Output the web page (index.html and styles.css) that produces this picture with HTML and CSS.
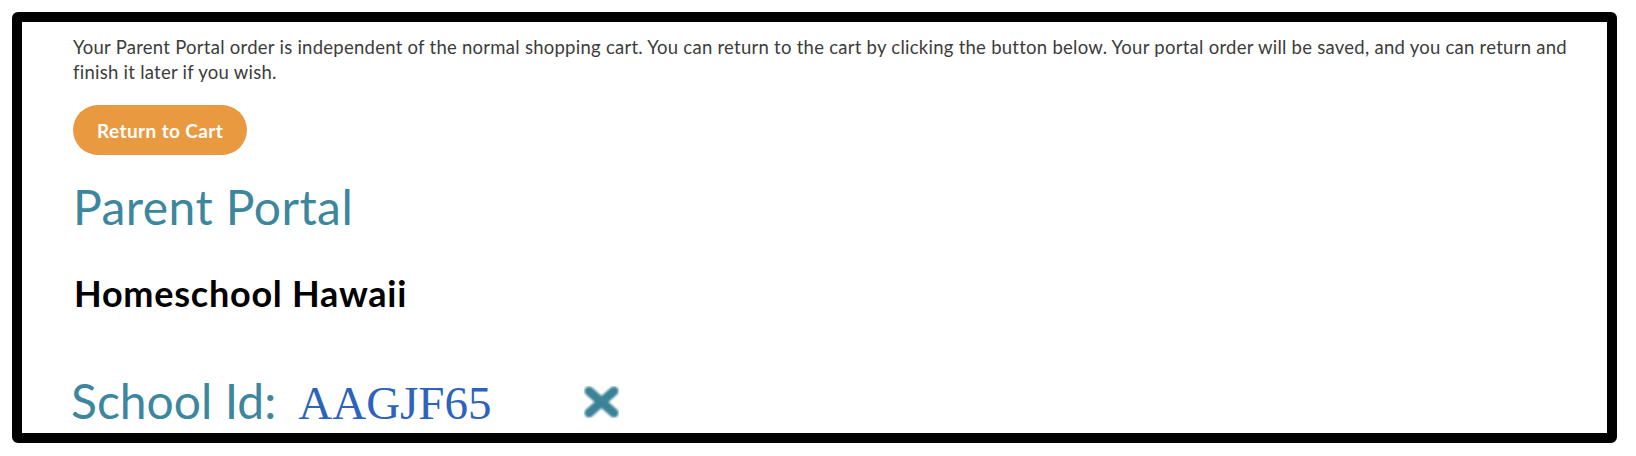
FILE: index.html
```html
<!DOCTYPE html>
<html lang="en">
<head>
<meta charset="utf-8">
<title>Parent Portal</title>
<link rel="stylesheet" href="styles.css">
</head>
<body>
<div class="frame">
  <p class="notice">Your Parent Portal order is independent of the normal shopping cart. You can return to the cart by clicking the button below. Your portal order will be saved, and you can return and finish it later if you wish.</p>
  <button class="btn-cart" type="button">Return to Cart</button>
  <h1 class="portal-title">Parent Portal</h1>
  <h2 class="school-name">Homeschool Hawaii</h2>
  <div class="school-row">
    <span class="school-label">School Id:</span>
    <span class="school-id">AAGJF65</span>
    <span class="remove-icon" aria-label="Remove">
      <svg width="37" height="34" viewBox="0 0 37 34">
        <defs>
          <filter id="soft" x="-20%" y="-20%" width="140%" height="140%">
            <feGaussianBlur stdDeviation="0.8"/>
          </filter>
        </defs>
        <g stroke="#3b8297" stroke-width="9" stroke-linecap="round" filter="url(#soft)">
          <line x1="6" y1="6" x2="31" y2="28"/>
          <line x1="31" y1="6" x2="6" y2="28"/>
        </g>
      </svg>
    </span>
  </div>
</div>
</body>
</html>
```

FILE: styles.css
```css
html, body {
  margin: 0;
  padding: 0;
  background: #ffffff;
}

.frame {
  margin: 12px 19px 13px 12px;
  height: 398px;
  border: 10px solid #000000;
  border-radius: 6px;
  padding: 13px 30px 0 51px;
  box-sizing: content-box;
  overflow: hidden;
  font-family: Lato, "Open Sans", sans-serif;
}

.notice {
  margin: 0;
  font-size: 18.5px;
  line-height: 25px;
  letter-spacing: 0.26px;
  color: #3c3c3c;
}

.btn-cart {
  display: block;
  margin-top: 20px;
  height: 50px;
  padding: 0 24px;
  border: none;
  border-radius: 25px;
  background: #e99a40;
  color: #ffffff;
  font-family: Lato, sans-serif;
  font-weight: 700;
  font-size: 19px;
  letter-spacing: 0.4px;
}

.portal-title {
  margin: 23px 0 0 0;
  font-size: 48px;
  line-height: 1.2;
  font-weight: 400;
  letter-spacing: 0.45px;
  color: #3d879e;
}

.school-name {
  margin: 36px 0 0 1px;
  font-size: 36px;
  line-height: 1.2;
  font-weight: 700;
  color: #000000;
  letter-spacing: 0.75px;
}

.school-row {
  display: flex;
  align-items: baseline;
  margin-top: 57px;
}

.school-label {
  margin-left: -2px;
  font-size: 48px;
  line-height: 1.2;
  color: #3d879e;
}

.school-id {
  margin-left: 22px;
  font-family: "Liberation Serif", "Times New Roman", serif;
  font-size: 47px;
  color: #2d62bd;
}

.remove-icon {
  margin-left: 91px;
  margin-top: 2px;
  align-self: center;
  display: flex;
}
```
